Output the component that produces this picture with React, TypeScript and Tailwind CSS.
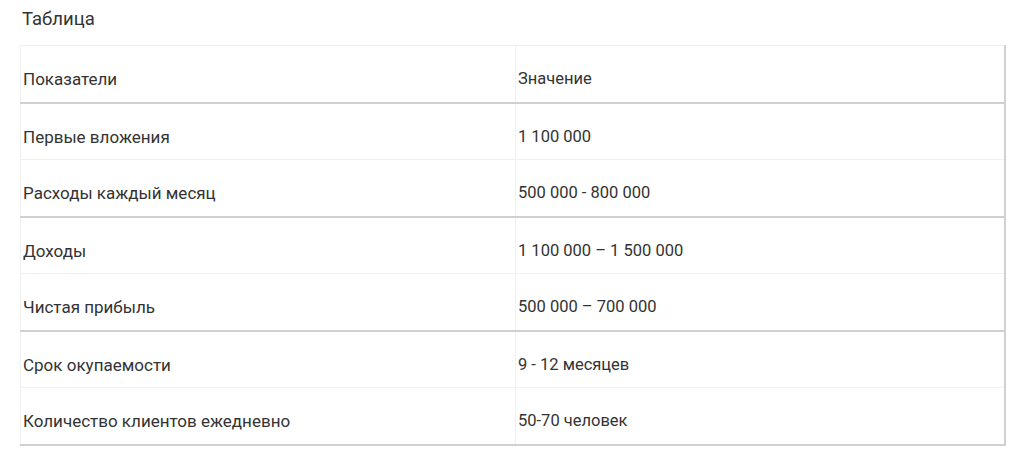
const rows: [string, string][] = [
  ["Первые вложения", "1 100 000"],
  ["Расходы каждый месяц", "500 000 - 800 000"],
  ["Доходы", "1 100 000 – 1 500 000"],
  ["Чистая прибыль", "500 000 – 700 000"],
  ["Срок окупаемости", "9 - 12 месяцев"],
  ["Количество клиентов ежедневно", "50-70 человек"],
];

export default function App() {
  return (
    <div className="min-h-screen bg-white pl-5 pr-[18px] pt-[5px] font-['Roboto',sans-serif] text-[#333]">
      <h2 className="ml-[2px] text-[18.5px] leading-[28px]">Таблица</h2>
      <table className="mt-[12px] w-full border-collapse">
        <thead>
          <tr className="h-[57px] border-b-2 border-[#d0d0d0]">
            <th className="border-l border-t border-[#f0f0f0] pl-[2px] pt-[12px] text-left align-middle text-[17px] font-normal">
              Показатели
            </th>
            <th className="border-l border-t border-r-2 border-[#f0f0f0] border-r-[#d0d0d0] pl-[2px] pt-[12px] text-left align-middle text-[16.5px] font-normal">
              Значение
            </th>
          </tr>
        </thead>
        <tbody>
          {rows.map(([label, value], i) => (
            <tr
              key={label}
              className={`h-[57px] ${i % 2 === 0 ? "border-b border-[#f0f0f0]" : "border-b-2 border-[#d0d0d0]"}`}
            >
              <td className="w-[495px] border-l border-[#f0f0f0] pl-[2px] pt-[12px] align-middle text-[17px]">
                {label}
              </td>
              <td className="border-l border-r-2 border-[#f0f0f0] border-r-[#d0d0d0] pl-[2px] pt-[12px] align-middle text-[16.5px]">
                {value}
              </td>
            </tr>
          ))}
        </tbody>
      </table>
    </div>
  );
}
